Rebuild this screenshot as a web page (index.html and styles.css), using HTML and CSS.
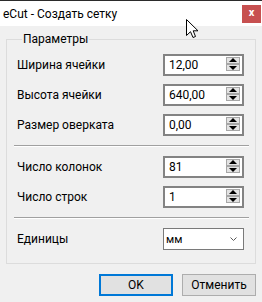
FILE: index.html
```html
<!DOCTYPE html>
<html>
<head>
  <meta charset="UTF-8" />
  <title>eCut - Создать сетку</title>
  <link rel="stylesheet" href="styles.css">
</head>
<body>
  <div class="window">
    <div class="titlebar">
      <span class="title">eCut - Создать сетку</span>
      <span class="close">x</span>
    </div>
    <div class="client">
      <fieldset class="group">
        <legend>Параметры</legend>
        <div class="row">
          <span class="label">Ширина ячейки</span>
          <div class="num"><span class="value">12,00</span><span class="spin"><i class="up"></i><i class="down"></i></span></div>
        </div>
        <div class="row">
          <span class="label">Высота ячейки</span>
          <div class="num"><span class="value">640,00</span><span class="spin"><i class="up"></i><i class="down"></i></span></div>
        </div>
        <div class="row">
          <span class="label">Размер оверката</span>
          <div class="num"><span class="value">0,00</span><span class="spin"><i class="up"></i><i class="down"></i></span></div>
        </div>
        <hr />
        <div class="row">
          <span class="label">Число колонок</span>
          <div class="num"><span class="value">81</span><span class="spin"><i class="up"></i><i class="down"></i></span></div>
        </div>
        <div class="row">
          <span class="label">Число строк</span>
          <div class="num"><span class="value">1</span><span class="spin"><i class="up"></i><i class="down"></i></span></div>
        </div>
        <hr />
        <div class="row">
          <span class="label">Единицы</span>
          <div class="combo">
            <span class="value">мм</span>
            <svg class="chevron" width="7" height="4" viewBox="0 0 7 4"><path d="M0.5 0.5 L3.5 3.5 L6.5 0.5" fill="none" stroke="#5a5a5a" stroke-width="1"/></svg>
          </div>
        </div>
      </fieldset>
      <div class="buttons">
        <button class="btn default">OK</button>
        <button class="btn">Отменить</button>
      </div>
    </div>
    <svg class="cursor" width="13" height="20" viewBox="0 0 13 20">
      <path d="M0.5 0.5 L0.5 16.5 L4.5 12.7 L7 18.5 L9.5 17.5 L7.2 11.8 L12 11.8 Z" fill="#fff" stroke="#000" stroke-width="1" stroke-linejoin="miter"/>
    </svg>
  </div>
</body>
</html>
```

FILE: styles.css
```css
body {
  margin: 0;
  font-family: Roboto, "Liberation Sans", sans-serif;
  font-size: 12px;
  color: #000;
  background: #f0f0f0;
}

.window {
  position: relative;
  width: 262px;
  height: 302px;
  overflow: hidden;
}

/* title bar */
.titlebar {
  height: 25px;
  border-top: 1px solid #2b2b2b;
  background: #fff;
  display: flex;
  align-items: center;
  justify-content: space-between;
  padding-left: 3px;
}
.titlebar .title {
  font-size: 12px;
}
.titlebar .close {
  width: 19px;
  height: 18px;
  margin-right: 1px;
  background: #c75050;
  color: #fff;
  font-weight: bold;
  font-size: 11px;
  line-height: 16px;
  text-align: center;
}

/* client area */
.client {
  padding: 0 6px;
}

fieldset.group {
  margin: 6px 0 0 0;
  padding: 8px 11px 13px 10px;
  border: 1px solid #dcdcdc;
}
fieldset.group > legend {
  padding: 0 1px;
  margin-left: 5px;
  line-height: 14px;
}

.row {
  display: flex;
  align-items: center;
  height: 22px;
}
.row + .row {
  margin-top: 8px;
}
.row > .label {
  flex: 1;
}

fieldset.group > hr {
  margin: 9px -5px 9px -3px;
  border: 0;
  border-top: 1px solid #a0a0a0;
  border-bottom: 1px solid #fff;
  height: 0;
}

/* numeric up-down */
.num {
  width: 77px;
  height: 18px;
  border: 2px solid #838383;
  background: #fff;
  display: flex;
  align-items: center;
}
.num > .value {
  flex: 1;
  padding-left: 4px;
}
.num > .spin {
  align-self: flex-start;
  margin: 1px 2px 0 0;
  display: flex;
  flex-direction: column;
}
.num > .spin > i {
  display: block;
  position: relative;
  width: 12px;
  height: 5px;
  border: 1px solid #a7a7a7;
  background: #e3e3e3;
}
.num > .spin > i::after {
  content: "";
  position: absolute;
  left: 2px;
  border-left: 4px solid transparent;
  border-right: 4px solid transparent;
}
.num > .spin > i.up::after {
  top: 0;
  border-bottom: 4px solid #000;
}
.num > .spin > i.down::after {
  top: 1px;
  border-top: 4px solid #000;
}

/* combo box */
.combo {
  width: 79px;
  height: 20px;
  border: 1px solid #7a7a7a;
  background: #fff;
  display: flex;
  align-items: center;
}
.combo > .value {
  flex: 1;
  padding-left: 2px;
  font-size: 11px;
}
.combo > .chevron {
  margin-right: 6px;
}

/* dialog buttons */
.buttons {
  display: flex;
  justify-content: flex-end;
  gap: 9px;
  margin-top: 10px;
}
.btn {
  width: 74px;
  height: 22px;
  padding: 0;
  font-family: inherit;
  font-size: 12px;
  color: #000;
  background: #e1e1e1;
  border: 1px solid #adadad;
  border-radius: 0;
}
.btn.default {
  border: 2px solid #0078d7;
}

.cursor {
  position: absolute;
  left: 186px;
  top: 19px;
}
```
